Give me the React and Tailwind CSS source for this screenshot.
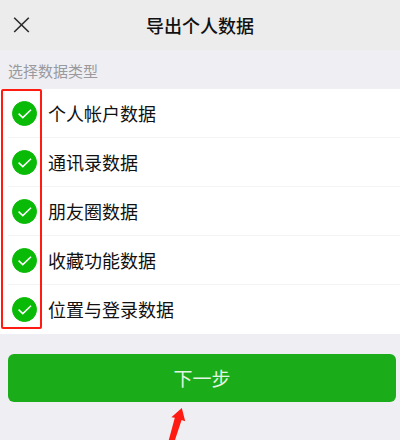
import React, { useState } from "react";

const dataTypes = [
  { id: "account", label: "个人帐户数据" },
  { id: "contacts", label: "通讯录数据" },
  { id: "moments", label: "朋友圈数据" },
  { id: "favorites", label: "收藏功能数据" },
  { id: "location", label: "位置与登录数据" },
];

const Header = () => (
  <header className="relative flex items-center justify-center h-[50px] bg-[#ececec]">
    <button
      type="button"
      aria-label="关闭"
      className="absolute left-3 inset-y-0 flex items-center cursor-pointer"
    >
      <svg className="w-5 h-5" viewBox="0 0 20 20" fill="none" stroke="#2b2b2b" strokeWidth="1.6">
        <path d="M2.2 2.7L16.8 17M16.8 2.7L2.2 17" />
      </svg>
    </button>
    <h1 className="text-[18px] leading-6 font-medium text-[#111111]">导出个人数据</h1>
  </header>
);

const DataTypeRow = ({ item, checked, onToggle }) => (
  <li className="ml-2 border-b border-[#f4f4f4] last:border-b-0">
    <label htmlFor={item.id} className="flex items-center h-12 pl-1 cursor-pointer">
      <span className="grid place-items-center w-[25px] h-[25px] mr-[11px]">
        <input
          type="checkbox"
          id={item.id}
          checked={checked}
          onChange={() => onToggle(item.id)}
          className="col-start-1 row-start-1 appearance-none w-[25px] h-[25px] rounded-full border border-gray-300 bg-white checked:border-[#09bb07] checked:bg-[#09bb07]"
        />
        {checked && (
          <svg
            className="col-start-1 row-start-1 w-[25px] h-[25px] pointer-events-none"
            viewBox="0 0 25 25"
            fill="none"
            stroke="#ffffff"
            strokeWidth="1.5"
          >
            <path d="M6.6 12.6L10.8 16.6L19 8.8" />
          </svg>
        )}
      </span>
      <span className="text-[18px] leading-6 text-[#111111]">{item.label}</span>
    </label>
  </li>
);

const App = () => {
  const [selected, setSelected] = useState(dataTypes.map((item) => item.id));

  const handleToggle = (id) => {
    setSelected((prev) =>
      prev.includes(id) ? prev.filter((value) => value !== id) : [...prev, id]
    );
  };

  return (
    <div className="min-h-screen overflow-hidden bg-[#eeeef3] font-['Noto_Sans_CJK_SC',sans-serif]">
      <Header />

      <main>
        <h2 className="px-2 pt-[9px] pb-[6px] text-[15px] leading-6 text-[#9a9a9e]">选择数据类型</h2>

        {/* Data types */}
        <div className="relative bg-white">
          <ul className="pb-px">
            {dataTypes.map((item) => (
              <DataTypeRow
                key={item.id}
                item={item}
                checked={selected.includes(item.id)}
                onToggle={handleToggle}
              />
            ))}
          </ul>
          {/* Highlight around the checkboxes */}
          <div className="absolute top-0 left-px bottom-[5px] w-[41px] border-2 border-[#ff1a12] rounded-xs pointer-events-none" />
        </div>

        {/* Next step */}
        <div className="relative pt-5 pl-2 pr-1">
          <button
            type="button"
            disabled={selected.length === 0}
            className="w-full h-12 rounded-md bg-[#1aad19] text-[19px] leading-6 text-[#e4f5e4] cursor-pointer disabled:opacity-50"
          >
            下一步
          </button>
          <svg
            className="absolute top-full left-[167px] w-5 h-[38px] pointer-events-none"
            viewBox="0 0 20 38"
            fill="#ff1a12"
          >
            <path d="M14.8 6L4.4 15.2L7.8 15.8L1.8 38H8L14.6 18L18.2 19.2Z" />
          </svg>
        </div>
      </main>
    </div>
  );
};

export default App;
